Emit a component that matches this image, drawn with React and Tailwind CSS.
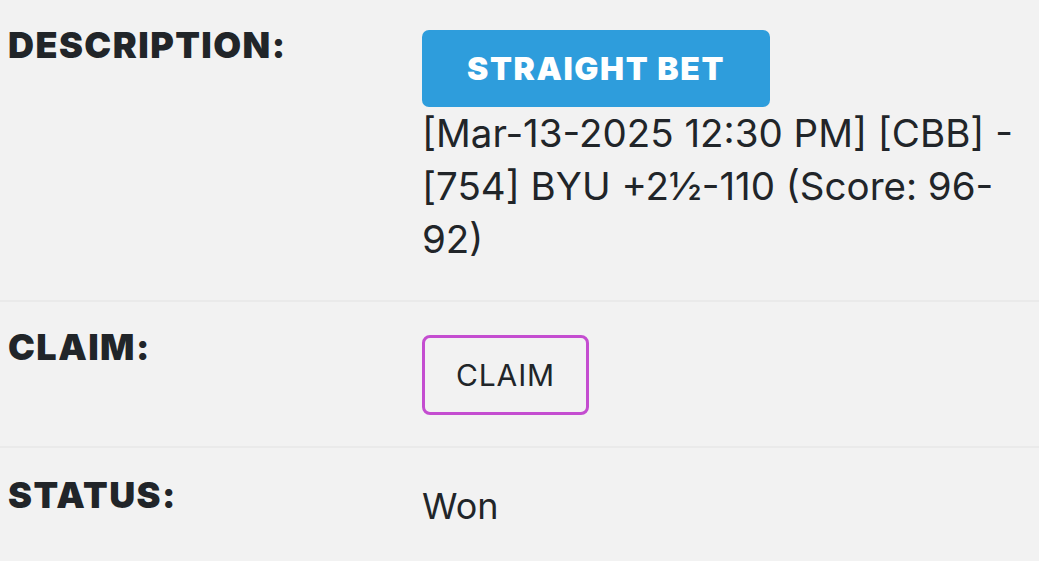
import React from 'react';

export default function App() {
  const label = "text-[36px] font-black uppercase tracking-[0.04em] text-[#212529] leading-none";

  return (
    <div className="w-[1039px] h-[561px] overflow-hidden bg-[#f2f2f2] text-[#212529]" style={{ fontFamily: 'Inter, "Liberation Sans", sans-serif' }}>
      {/* Description */}
      <div className="flex pl-[8px] pt-[30px] pb-[34px] border-b-2 border-[#eaeaea]">
        <div className="w-[414px] shrink-0 mt-[-3px]">
          <p className={label}>Description:</p>
        </div>
        <div className="w-[595px]">
          <span className="inline-flex items-center justify-center w-[348px] h-[77px] rounded-[7px] bg-[#2e9ddc] text-white text-[32px] font-black tracking-[0.05em]">
            STRAIGHT BET
          </span>
          <p className="text-[38.5px] leading-[53px]">
            [Mar-13-2025 12:30 PM] [CBB] - [754] BYU +2½-110 (Score: 96-92)
          </p>
        </div>
      </div>

      {/* Claim */}
      <div className="flex pl-[8px] pt-[33px] pb-[31px] border-b-2 border-[#eaeaea]">
        <div className="w-[414px] shrink-0 mt-[-6px]">
          <p className={label}>Claim:</p>
        </div>
        <div>
          <button className="flex items-center justify-center w-[167px] h-[80px] rounded-[8px] border-[3px] border-[#c44dd0] text-[30px] tracking-[0.03em] text-[#212529]">
            CLAIM
          </button>
        </div>
      </div>

      {/* Status */}
      <div className="flex pl-[8px] pt-[29px]">
        <div className="w-[414px] shrink-0">
          <p className={label}>Status:</p>
        </div>
        <p className="text-[36px] leading-none mt-[11px]">Won</p>
      </div>
    </div>
  );
}
